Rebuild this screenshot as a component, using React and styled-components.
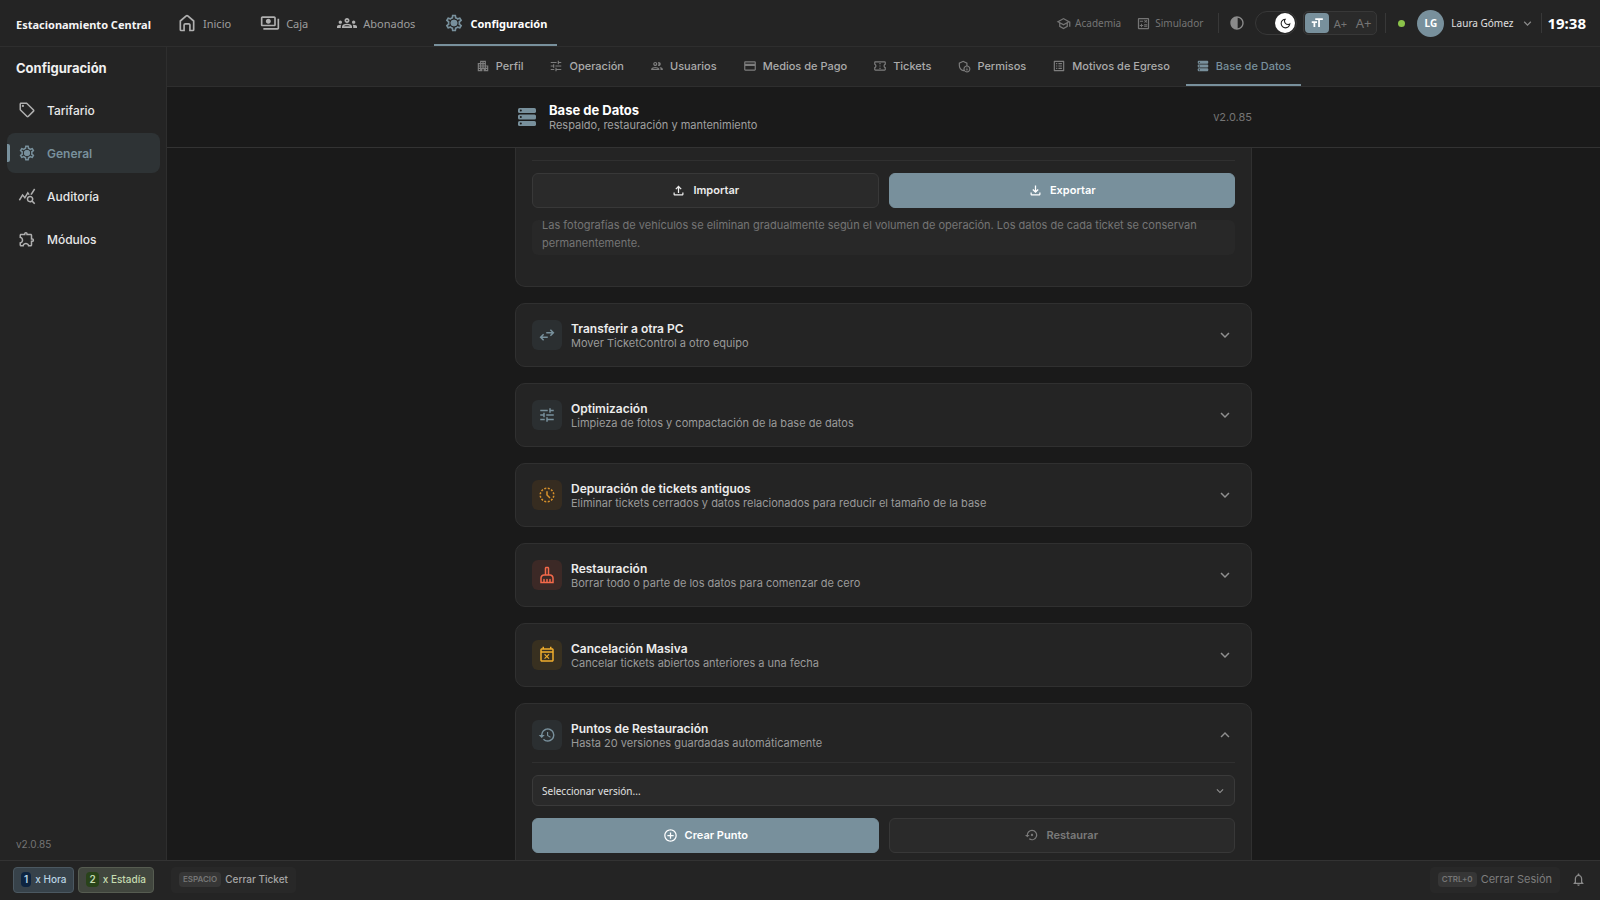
import React from 'react';
import styled, { createGlobalStyle } from 'styled-components';
import {
  MdAddCircleOutline,
  MdContrast,
  MdFormatSize,
  MdHistory,
  MdKeyboardArrowDown,
  MdKeyboardArrowUp,
  MdNotificationsNone,
  MdOutlineAdminPanelSettings,
  MdOutlineApartment,
  MdOutlineCalculate,
  MdOutlineCleaningServices,
  MdOutlineConfirmationNumber,
  MdOutlineCreditCard,
  MdOutlineDarkMode,
  MdOutlineEventBusy,
  MdOutlineExtension,
  MdOutlineFileDownload,
  MdOutlineFileUpload,
  MdOutlineGroup,
  MdOutlineGroups,
  MdOutlineHistoryToggleOff,
  MdOutlineListAlt,
  MdOutlinePayments,
  MdOutlineSchool,
  MdOutlineSell,
  MdOutlineSettings,
  MdQueryStats,
  MdSettingsBackupRestore,
  MdTune,
} from 'react-icons/md';

const inter = '"Inter", "Liberation Sans", sans-serif';
const noto = '"Noto Sans", "Open Sans", sans-serif';

const GlobalStyle = createGlobalStyle`
  * {
    box-sizing: border-box;
  }
  body {
    margin: 0;
    background: #1a1a1a;
    color: #e8e8e8;
    font-family: ${inter};
    font-size: 12px;
  }
  button, select, input {
    font-family: inherit;
    margin: 0;
  }
  svg {
    flex-shrink: 0;
    display: block;
  }
`;

const Page = styled.div`
  display: flex;
  flex-direction: column;
  height: 100vh;
  overflow: hidden;
`;

/* Top bar */
const TopBar = styled.header`
  display: flex;
  align-items: stretch;
  height: 47px;
  flex-shrink: 0;
  padding-right: 14px;
  background: #242424;
  border-bottom: 1px solid #2e2e2e;
  font-family: ${noto};
`;
const Brand = styled.div`
  display: flex;
  align-items: center;
  width: 167px;
  padding: 2px 0 0 16px;
  font-size: 11px;
  font-weight: 700;
  color: #f5f5f5;
  white-space: nowrap;
`;
const MainNav = styled.nav`
  display: flex;
  gap: 9px;
  flex: 1;
`;
const MainLink = styled.a`
  display: flex;
  align-items: center;
  gap: 6px;
  padding: 2px 10px 0;
  border-bottom: 2px solid ${(p) => (p.$active ? '#78909c' : 'transparent')};
  font-size: 11px;
  font-weight: ${(p) => (p.$active ? 700 : 400)};
  color: ${(p) => (p.$active ? '#ffffff' : '#9e9e9e')};
  text-decoration: none;

  svg {
    color: ${(p) => (p.$active ? '#78909c' : '#b0b0b0')};
  }
`;
const Tools = styled.div`
  display: flex;
  align-items: center;
`;
const ToolLink = styled.a`
  display: flex;
  align-items: center;
  gap: 4px;
  margin-right: 15px;
  font-size: 10px;
  color: #757575;
  text-decoration: none;
`;
const Divider = styled.span`
  width: 1px;
  height: 20px;
  background: #383838;
`;
const IconButton = styled.button`
  display: flex;
  align-items: center;
  justify-content: center;
  padding: 0;
  border: 0;
  background: none;
  color: #8a8a8a;
`;
const ContrastButton = styled(IconButton)`
  margin: 0 10px;
`;
const Switch = styled.label`
  display: flex;
  align-items: center;
  justify-content: flex-end;
  width: 42px;
  height: 24px;
  padding: 0 1px;
  margin-right: 6px;
  border: 1px solid #383838;
  border-radius: 12px;
  background: #242424;

  input {
    appearance: none;
    width: 0;
    height: 0;
  }
`;
const Knob = styled.span`
  display: flex;
  align-items: center;
  justify-content: center;
  width: 20px;
  height: 20px;
  border-radius: 50%;
  background: #fff;
  color: #222;
`;
const SizeGroup = styled.div`
  display: flex;
  align-items: center;
  height: 24px;
  width: 74px;
  padding: 0 1px;
  margin-right: 8px;
  border: 1px solid #383838;
  border-radius: 5px;
  background: #2a2a2a;
`;
const SizeButton = styled.button`
  display: flex;
  align-items: center;
  justify-content: center;
  flex: 1;
  height: 20px;
  padding: 0;
  border: 0;
  border-radius: 4px;
  background: ${(p) => (p.$active ? '#78909c' : 'transparent')};
  color: ${(p) => (p.$active ? '#fff' : '#757575')};
  font-size: ${(p) => p.$size || 11}px;
`;
const StatusDot = styled.span`
  width: 7px;
  height: 7px;
  margin: 0 12px;
  border-radius: 50%;
  background: #8bc34a;
`;
const UserButton = styled.button`
  display: flex;
  align-items: center;
  gap: 7px;
  padding: 0;
  margin-right: 6px;
  border: 0;
  background: none;
  color: #e0e0e0;
  font-size: 10px;

  svg {
    color: #8a8a8a;
  }
`;
const Avatar = styled.span`
  display: flex;
  align-items: center;
  justify-content: center;
  width: 27px;
  height: 27px;
  border-radius: 50%;
  background: #78909c;
  color: #fff;
  font-size: 10px;
  font-weight: 700;
`;
const Clock = styled.time`
  margin-left: 5px;
  font-size: 15px;
  font-weight: 700;
  color: #fff;
`;

/* Sidebar */
const Body = styled.div`
  display: flex;
  flex: 1;
  min-height: 0;
`;
const Sidebar = styled.aside`
  display: flex;
  flex-direction: column;
  width: 167px;
  flex-shrink: 0;
  padding: 11px 6px 8px 7px;
  background: #242424;
  border-right: 1px solid #2e2e2e;
`;
const SidebarTitle = styled.h2`
  margin: 0 0 12px;
  padding-left: 9px;
  font-size: 13px;
  line-height: 20px;
  font-weight: 700;
  color: #f0f0f0;
`;
const SideNav = styled.nav`
  display: flex;
  flex-direction: column;
  gap: 3px;
  flex: 1;
`;
const SideLink = styled.a`
  display: flex;
  align-items: center;
  height: 40px;
  border-radius: 8px;
  background: ${(p) => (p.$active ? '#2e3335' : 'transparent')};
  font-size: 12px;
  font-weight: ${(p) => (p.$active ? 600 : 500)};
  color: ${(p) => (p.$active ? '#78909c' : '#e8e8e8')};
  text-decoration: none;

  &::before {
    content: '';
    width: 3px;
    height: 18px;
    margin-right: 8px;
    border-radius: 0 2px 2px 0;
    background: ${(p) => (p.$active ? '#78909c' : 'transparent')};
  }
  svg {
    margin-right: 11px;
    color: ${(p) => (p.$active ? '#78909c' : '#b0b0b0')};
  }
`;
const SideVersion = styled.div`
  padding-left: 9px;
  font-size: 10px;
  line-height: 16px;
  color: #757575;
`;

/* Section tabs */
const Main = styled.main`
  display: flex;
  flex-direction: column;
  flex: 1;
  min-width: 0;
`;
const Tabs = styled.nav`
  display: flex;
  justify-content: center;
  gap: 6px;
  height: 40px;
  flex-shrink: 0;
  background: #242424;
  border-bottom: 1px solid #2e2e2e;
`;
const Tab = styled.a`
  display: flex;
  align-items: center;
  gap: 6px;
  padding: 1px 10px 0;
  border-bottom: 2px solid ${(p) => (p.$active ? '#78909c' : 'transparent')};
  font-size: 11px;
  font-weight: 500;
  color: ${(p) => (p.$active ? '#78909c' : '#ababab')};
  text-decoration: none;
  white-space: nowrap;

  svg {
    color: ${(p) => (p.$active ? '#78909c' : '#7d7d7d')};
  }
`;
const PageHeader = styled.div`
  display: flex;
  justify-content: center;
  height: 61px;
  flex-shrink: 0;
  border-bottom: 1px solid #333;
`;
const PageHeaderInner = styled.div`
  display: flex;
  align-items: center;
  gap: 10px;
  width: 737px;
  max-width: 100%;
  color: #78909c;
`;
const PageTitles = styled.div`
  flex: 1;
`;
const PageTitle = styled.h1`
  margin: 0;
  font-size: 13px;
  line-height: 16px;
  font-weight: 700;
  color: #fff;
`;
const PageSubtitle = styled.p`
  margin: 0;
  font-size: 11px;
  line-height: 14px;
  color: #a0a0a0;
`;
const PageVersion = styled.span`
  font-size: 11px;
  color: #757575;
`;

/* Cards */
const Content = styled.div`
  display: flex;
  flex-direction: column;
  align-items: center;
  gap: 16px;
  flex: 1;
  min-height: 0;
  overflow: hidden;
`;
const Card = styled.section`
  width: 737px;
  max-width: 100%;
  flex-shrink: 0;
  padding: 16px;
  border: 1px solid #303030;
  border-radius: ${(p) => (p.$continued ? '0 0 10px 10px' : '10px')};
  background: #242424;
  ${(p) => p.$continued && 'border-top: 0; padding-top: 0;'}
`;
const CardHead = styled.button`
  display: flex;
  align-items: center;
  gap: 9px;
  width: 100%;
  padding: 0 1px 0 0;
  border: 0;
  background: none;
  color: #8f8f8f;
  text-align: left;
`;
const tones = {
  slate: ['#78909c', '#2b2f31'],
  orange: ['#d8912b', '#362c20'],
  red: ['#f4694a', '#3c2926'],
  amber: ['#f0ad2c', '#383020'],
};
const IconBox = styled.span`
  display: flex;
  align-items: center;
  justify-content: center;
  width: 30px;
  height: 30px;
  border-radius: 6px;
  color: ${(p) => tones[p.$tone][0]};
  background: ${(p) => tones[p.$tone][1]};
`;
const CardText = styled.span`
  display: flex;
  flex-direction: column;
  flex: 1;
  padding-top: 2px;
`;
const CardTitle = styled.span`
  font-size: 12px;
  line-height: 14px;
  font-weight: 600;
  color: #ececec;
`;
const CardSubtitle = styled.span`
  font-size: 11px;
  line-height: 14px;
  color: #9a9a9a;
`;
const CardBody = styled.div`
  display: flex;
  flex-direction: column;
  gap: 12px;
  margin-top: 12px;
  padding-top: 12px;
  border-top: 1px solid #303030;
`;
const ButtonRow = styled.div`
  display: grid;
  grid-template-columns: 1fr 1fr;
  gap: 10px;
`;
const Button = styled.button`
  display: flex;
  align-items: center;
  justify-content: center;
  gap: 7px;
  height: 35px;
  padding: 0 6px 1px;
  border: 1px solid ${(p) => (p.$primary ? '#78909c' : '#383838')};
  border-radius: 6px;
  background: ${(p) => (p.$primary ? '#78909c' : '#2a2a2a')};
  color: ${(p) => (p.$primary ? '#fff' : '#ececec')};
  font-size: 11px;
  font-weight: 600;

  &:disabled {
    color: #7a7a7a;
  }
`;
const Note = styled.div`
  display: flex;
  align-items: center;
  height: 35px;
  margin-bottom: 15px;
  padding: 0 10px 7px;
  border-radius: 6px;
  background: #282828;
  font-size: 11px;
  line-height: 18px;
  color: #757575;
`;
const SelectWrap = styled.div`
  display: grid;
  align-items: center;

  > * {
    grid-area: 1 / 1;
  }
  svg {
    justify-self: end;
    margin-right: 8px;
    color: #8f8f8f;
    pointer-events: none;
  }
`;
const Select = styled.select`
  appearance: none;
  width: 100%;
  height: 31px;
  padding: 0 9px;
  border: 1px solid #3a3a3a;
  border-radius: 6px;
  background: #2a2a2a;
  color: #e0e0e0;
  font-family: ${noto};
  font-size: 10px;
`;

/* Footer */
const Footer = styled.footer`
  display: flex;
  align-items: center;
  height: 40px;
  flex-shrink: 0;
  gap: 4px;
  padding: 0 14px 2px 13px;
  background: #242424;
  border-top: 1px solid #333;
`;
const chips = {
  blue: { bg: '#37424a', border: '#4b5861', color: '#b9d3e4', key: '#0d2440' },
  green: { bg: '#41463e', border: '#565c51', color: '#c5dcb0', key: '#29431a' },
  plain: { bg: '#282828', border: '#282828', color: '#a5a5a5', key: '#363636' },
  dim: { bg: '#282828', border: '#282828', color: '#7d7d7d', key: '#363636' },
};
const Chip = styled.button`
  display: flex;
  align-items: center;
  gap: 4px;
  height: 26px;
  padding: 0 7px 1px;
  border: 1px solid ${(p) => chips[p.$kind].border};
  border-radius: 4px;
  background: ${(p) => chips[p.$kind].bg};
  color: ${(p) => chips[p.$kind].color};
  font-size: ${(p) => (p.$kind === 'dim' ? 11 : 10)}px;
  font-weight: ${(p) => (p.$kind === 'dim' ? 400 : 500)};
  white-space: nowrap;
`;
const Key = styled.kbd`
  padding: 0 ${(p) => (p.$small ? 4 : 3)}px;
  border-radius: 4px;
  background: ${(p) => chips[p.$kind].key};
  color: ${(p) => (p.$small ? '#757575' : 'inherit')};
  font-family: ${inter};
  font-size: ${(p) => (p.$small ? 8 : 10)}px;
  line-height: 15px;
  font-weight: 600;
`;
const FooterGap = styled.span`
  flex: ${(p) => (p.$fill ? '1' : '0 0 9px')};
`;
const BellButton = styled(IconButton)`
  margin-left: 7px;
`;

const HomeIcon = ({ size }) => (
  <svg width={size} height={size} viewBox="0 0 24 24" fill="none" stroke="currentColor" strokeWidth="2">
    <path d="M4 9.6 10.7 3.7a2 2 0 0 1 2.6 0L20 9.6V20a1 1 0 0 1-1 1h-3.5v-6.5a1.5 1.5 0 0 0-1.5-1.5h-4a1.5 1.5 0 0 0-1.5 1.5V21H5a1 1 0 0 1-1-1z" />
  </svg>
);

const GearIcon = ({ size }) => (
  <svg width={size} height={size} viewBox="0 0 24 24">
    <MdOutlineSettings size={24} />
    <circle cx="12" cy="12" r="4" fill="currentColor" />
  </svg>
);

const StorageIcon = ({ size }) => (
  <svg width={size} height={size} viewBox="0 0 24 24">
    {[3, 9.5, 16].map((y) => (
      <g key={y}>
        <rect x="3" y={y} width="18" height="5" rx="1.6" fill="currentColor" />
        <circle cx="5.8" cy={y + 2.5} r="1" fill="#1a1a1a" />
      </g>
    ))}
  </svg>
);

const TransferIcon = ({ size }) => (
  <svg width={size} height={size} viewBox="0 0 24 24" fill="none" stroke="currentColor" strokeWidth="2">
    <path d="M11 9h9M16.5 5l4 4-4 4M13 15H4M7.5 11l-4 4 4 4" />
  </svg>
);

const mainLinks = [
  { label: 'Inicio', icon: HomeIcon },
  { label: 'Caja', icon: MdOutlinePayments },
  { label: 'Abonados', icon: MdOutlineGroups },
  { label: 'Configuración', icon: GearIcon, active: true },
];

const sideLinks = [
  { label: 'Tarifario', icon: MdOutlineSell },
  { label: 'General', icon: GearIcon, active: true },
  { label: 'Auditoría', icon: MdQueryStats },
  { label: 'Módulos', icon: MdOutlineExtension },
];

const tabs = [
  { label: 'Perfil', icon: MdOutlineApartment },
  { label: 'Operación', icon: MdTune },
  { label: 'Usuarios', icon: MdOutlineGroup },
  { label: 'Medios de Pago', icon: MdOutlineCreditCard },
  { label: 'Tickets', icon: MdOutlineConfirmationNumber },
  { label: 'Permisos', icon: MdOutlineAdminPanelSettings },
  { label: 'Motivos de Egreso', icon: MdOutlineListAlt },
  { label: 'Base de Datos', icon: StorageIcon, active: true },
];

const sections = [
  { title: 'Transferir a otra PC', text: 'Mover TicketControl a otro equipo', icon: TransferIcon, tone: 'slate' },
  { title: 'Optimización', text: 'Limpieza de fotos y compactación de la base de datos', icon: MdTune, tone: 'slate' },
  {
    title: 'Depuración de tickets antiguos',
    text: 'Eliminar tickets cerrados y datos relacionados para reducir el tamaño de la base',
    icon: MdOutlineHistoryToggleOff,
    tone: 'orange',
  },
  { title: 'Restauración', text: 'Borrar todo o parte de los datos para comenzar de cero', icon: MdOutlineCleaningServices, tone: 'red' },
  { title: 'Cancelación Masiva', text: 'Cancelar tickets abiertos anteriores a una fecha', icon: MdOutlineEventBusy, tone: 'amber' },
];

const SectionHead = ({ title, text, icon: Icon, tone, open }) => (
  <CardHead type="button" aria-expanded={!!open}>
    <IconBox $tone={tone}><Icon size={18} /></IconBox>
    <CardText>
      <CardTitle>{title}</CardTitle>
      <CardSubtitle>{text}</CardSubtitle>
    </CardText>
    {open ? <MdKeyboardArrowUp size={18} /> : <MdKeyboardArrowDown size={18} />}
  </CardHead>
);

export default () => (
  <Page>
    <GlobalStyle />
    <TopBar>
      <Brand>Estacionamiento Central</Brand>
      <MainNav>
        {mainLinks.map(({ label, icon: Icon, active }) => (
          <MainLink key={label} href="#" $active={active}>
            <Icon size={20} />
            {label}
          </MainLink>
        ))}
      </MainNav>
      <Tools>
        <ToolLink href="#"><MdOutlineSchool size={15} />Academia</ToolLink>
        <ToolLink href="#"><MdOutlineCalculate size={15} />Simulador</ToolLink>
        <Divider />
        <ContrastButton type="button" aria-label="Contraste"><MdContrast size={16} /></ContrastButton>
        <Switch>
          <input type="checkbox" defaultChecked aria-label="Modo oscuro" />
          <Knob><MdOutlineDarkMode size={13} /></Knob>
        </Switch>
        <SizeGroup>
          <SizeButton type="button" $active aria-label="Texto normal"><MdFormatSize size={14} /></SizeButton>
          <SizeButton type="button" $size={11}>A+</SizeButton>
          <SizeButton type="button" $size={13}>A+</SizeButton>
        </SizeGroup>
        <Divider />
        <StatusDot />
        <UserButton type="button">
          <Avatar>LG</Avatar>
          Laura Gómez
          <MdKeyboardArrowDown size={15} />
        </UserButton>
        <Divider />
        <Clock>19:38</Clock>
      </Tools>
    </TopBar>

    <Body>
      <Sidebar>
        <SidebarTitle>Configuración</SidebarTitle>
        <SideNav>
          {sideLinks.map(({ label, icon: Icon, active }) => (
            <SideLink key={label} href="#" $active={active}>
              <Icon size={18} />
              {label}
            </SideLink>
          ))}
        </SideNav>
        <SideVersion>v2.0.85</SideVersion>
      </Sidebar>

      <Main>
        <Tabs>
          {tabs.map(({ label, icon: Icon, active }) => (
            <Tab key={label} href="#" $active={active}>
              <Icon size={14} />
              {label}
            </Tab>
          ))}
        </Tabs>
        <PageHeader>
          <PageHeaderInner>
            <StorageIcon size={24} />
            <PageTitles>
              <PageTitle>Base de Datos</PageTitle>
              <PageSubtitle>Respaldo, restauración y mantenimiento</PageSubtitle>
            </PageTitles>
            <PageVersion>v2.0.85</PageVersion>
          </PageHeaderInner>
        </PageHeader>

        <Content>
          <Card $continued>
            <CardBody>
              <ButtonRow>
                <Button type="button"><MdOutlineFileUpload size={15} />Importar</Button>
                <Button type="button" $primary><MdOutlineFileDownload size={15} />Exportar</Button>
              </ButtonRow>
              <Note>
                Las fotografías de vehículos se eliminan gradualmente según el volumen de operación. Los datos de cada ticket se conservan permanentemente.
              </Note>
            </CardBody>
          </Card>

          {sections.map((section) => (
            <Card key={section.title}>
              <SectionHead {...section} />
            </Card>
          ))}

          <Card>
            <SectionHead
              title="Puntos de Restauración"
              text="Hasta 20 versiones guardadas automáticamente"
              icon={MdHistory}
              tone="slate"
              open
            />
            <CardBody>
              <SelectWrap>
                <Select aria-label="Versión" defaultValue="">
                  <option value="">Seleccionar versión...</option>
                </Select>
                <MdKeyboardArrowDown size={14} />
              </SelectWrap>
              <ButtonRow>
                <Button type="button" $primary><MdAddCircleOutline size={15} />Crear Punto</Button>
                <Button type="button" disabled><MdSettingsBackupRestore size={14} />Restaurar</Button>
              </ButtonRow>
            </CardBody>
          </Card>
        </Content>
      </Main>
    </Body>

    <Footer>
      <Chip type="button" $kind="blue"><Key $kind="blue">1</Key>x Hora</Chip>
      <Chip type="button" $kind="green"><Key $kind="green">2</Key>x Estadía</Chip>
      <FooterGap />
      <Chip type="button" $kind="plain"><Key $kind="plain" $small>ESPACIO</Key>Cerrar Ticket</Chip>
      <FooterGap $fill />
      <Chip type="button" $kind="dim"><Key $kind="dim" $small>CTRL+0</Key>Cerrar Sesión</Chip>
      <BellButton type="button" aria-label="Notificaciones"><MdNotificationsNone size={15} /></BellButton>
    </Footer>
  </Page>
);
